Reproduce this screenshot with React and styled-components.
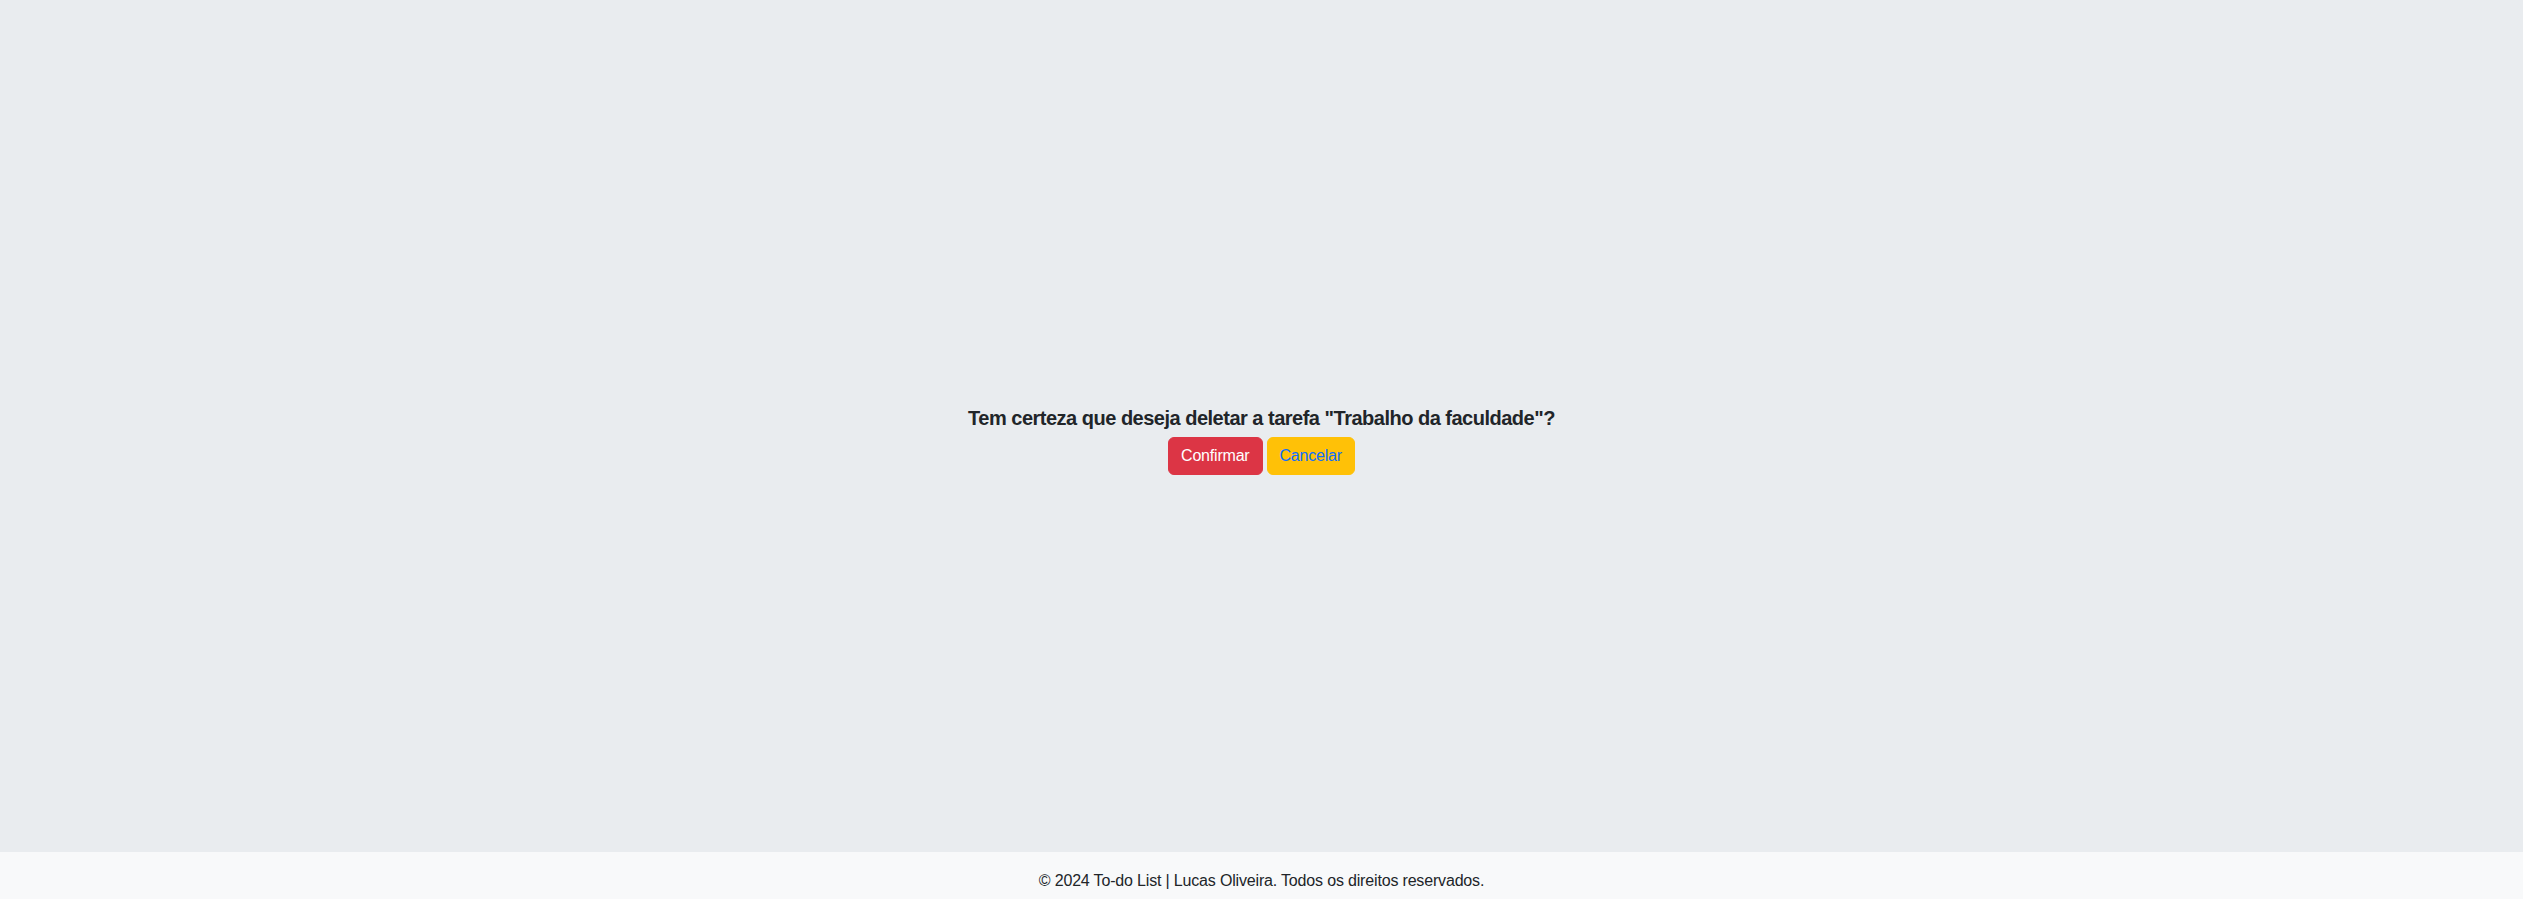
import React from 'react';
import styled, { createGlobalStyle } from 'styled-components';

const GlobalStyle = createGlobalStyle`
  html, body {
    margin: 0;
    padding: 0;
    height: 100%;
  }
  body {
    font-family: "Liberation Sans", Arial, sans-serif;
    color: #212529;
    background: #e9ecef;
    overflow: hidden;
  }
  #root {
    height: 100%;
  }
`;

const Page = styled.div`
  display: flex;
  flex-direction: column;
  height: 100vh;
`;

const Main = styled.main`
  flex: 1;
  display: flex;
  flex-direction: column;
  align-items: center;
  justify-content: center;
  padding-top: 29px;
`;

const Question = styled.h5`
  margin: 0 0 7px;
  font-size: 20px;
  font-weight: 700;
  line-height: 24px;
  letter-spacing: -0.5px;
  color: #212529;
`;

const Actions = styled.div`
  display: flex;
  gap: 4px;
`;

const Button = styled.button`
  height: 38px;
  padding: 0 12px;
  border: 1px solid ${p => p.$bg};
  border-radius: 6px;
  background: ${p => p.$bg};
  color: ${p => p.$fg};
  font-family: "Liberation Sans", Arial, sans-serif;
  font-size: 16px;
  line-height: 24px;
  letter-spacing: -0.2px;
  cursor: pointer;
`;

const Footer = styled.footer`
  height: 47px;
  flex-shrink: 0;
  display: flex;
  align-items: center;
  justify-content: center;
  background: #f8f9fa;
  font-size: 16px;
  letter-spacing: -0.17px;
  color: #212529;
  padding-top: 11px;
  box-sizing: border-box;
`;

export default function App() {
  return (
    <Page>
      <GlobalStyle />
      <Main>
        <Question>Tem certeza que deseja deletar a tarefa "Trabalho da faculdade"?</Question>
        <Actions>
          <Button $bg="#dc3545" $fg="#ffffff">Confirmar</Button>
          <Button $bg="#ffc107" $fg="#0d6efd">Cancelar</Button>
        </Actions>
      </Main>
      <Footer>© 2024 To-do List | Lucas Oliveira. Todos os direitos reservados.</Footer>
    </Page>
  );
}
